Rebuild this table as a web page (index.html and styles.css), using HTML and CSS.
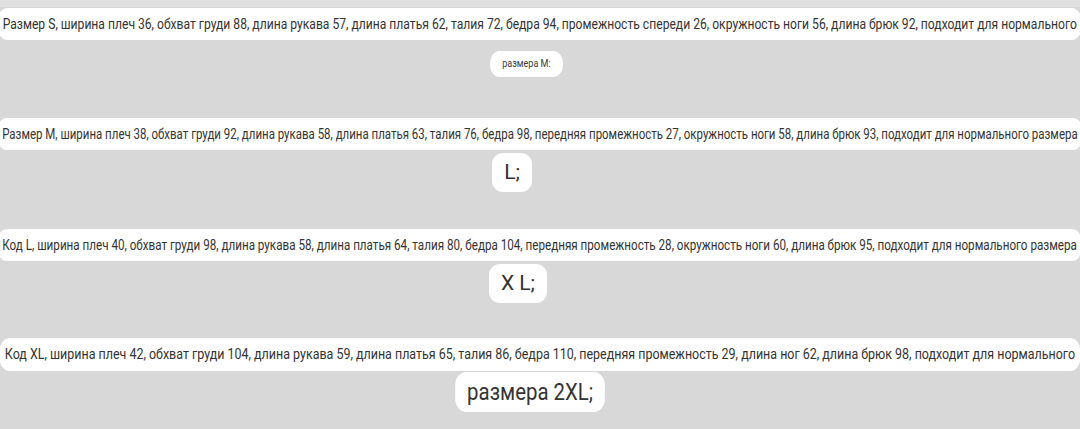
FILE: index.html
```html
<!DOCTYPE html>
<html lang="ru">

<head>
    <meta charset="UTF-8">
    <meta name="viewport" content="width=device-width, initial-scale=1.0">
    <title>Размеры</title>
    <link rel="stylesheet" href="styles.css">
</head>

<body>
    <div class="page">
        <div class="caption caption-s">
            <span class="line wide">Размер S, ширина плеч 36, обхват груди 88, длина рукава 57, длина платья 62, талия 72, бедра 94, промежность спереди 26, окружность ноги 56, длина брюк 92, подходит для нормального</span>
            <span class="line tail tiny">размера M:</span>
        </div>

        <div class="caption caption-m">
            <span class="line wide">Размер M, ширина плеч 38, обхват груди 92, длина рукава 58, длина платья 63, талия 76, бедра 98, передняя промежность 27, окружность ноги 58, длина брюк 93, подходит для нормального размера</span>
            <span class="line tail big">L;</span>
        </div>

        <div class="caption caption-l">
            <span class="line wide">Код L, ширина плеч 40, обхват груди 98, длина рукава 58, длина платья 64, талия 80, бедра 104, передняя промежность 28, окружность ноги 60, длина брюк 95, подходит для нормального размера</span>
            <span class="line tail big">X L;</span>
        </div>

        <div class="caption caption-xl">
            <span class="line wide">Код XL, ширина плеч 42, обхват груди 104, длина рукава 59, длина платья 65, талия 86, бедра 110, передняя промежность 29, длина ног 62, длина брюк 98, подходит для нормального</span>
            <span class="line tail huge">размера 2XL;</span>
        </div>
    </div>
</body>

</html>
```

FILE: styles.css
```css
body {
    margin: 0;
    background-color: #d8d8d8;
    font-family: Roboto, "Noto Sans", sans-serif;
    color: #333;
    overflow: hidden;
}

.page {
    height: 429px;
    border-top: 7px solid #e0e0e0;
    padding-top: 1px;
    box-sizing: border-box;
}

.caption {
    display: flex;
    flex-direction: column;
    align-items: center;
}

.caption-s {
    height: 110px;
}

.caption-m {
    height: 111px;
}

.caption-l {
    height: 109px;
}

.line {
    display: inline-block;
    white-space: nowrap;
    background-color: #fff;
    box-sizing: border-box;
}

.wide {
    height: 32px;
    line-height: 32px;
    font-size: 15px;
    padding: 0 6px;
    border-radius: 12px;
}

.caption-s .wide {
    transform: scaleX(0.808);
}

.caption-m .wide {
    transform: scaleX(0.765);
}

.caption-l .wide {
    transform: scaleX(0.777);
}

.caption-xl .wide {
    height: 33px;
    line-height: 33px;
    transform: scaleX(0.831);
}

/* second line of each caption sits a little left of centre */
.tiny {
    margin-top: 11px;
    margin-right: 28px;
    height: 26px;
    line-height: 26px;
    font-size: 11px;
    padding: 0 15px;
    border-radius: 12px;
    color: #3a3a3a;
    transform: scaleX(0.82);
}

.big {
    margin-top: 3px;
    height: 39px;
    line-height: 39px;
    font-size: 21px;
    padding: 0 12px;
    border-radius: 11px;
}

.caption-m .big {
    margin-right: 56px;
}

.caption-l .big {
    margin-right: 44px;
}

.huge {
    margin-top: 1px;
    margin-right: 20px;
    height: 40px;
    line-height: 40px;
    font-size: 24px;
    padding: 0 14px;
    border-radius: 13px;
    transform: scaleX(0.85);
}
```
